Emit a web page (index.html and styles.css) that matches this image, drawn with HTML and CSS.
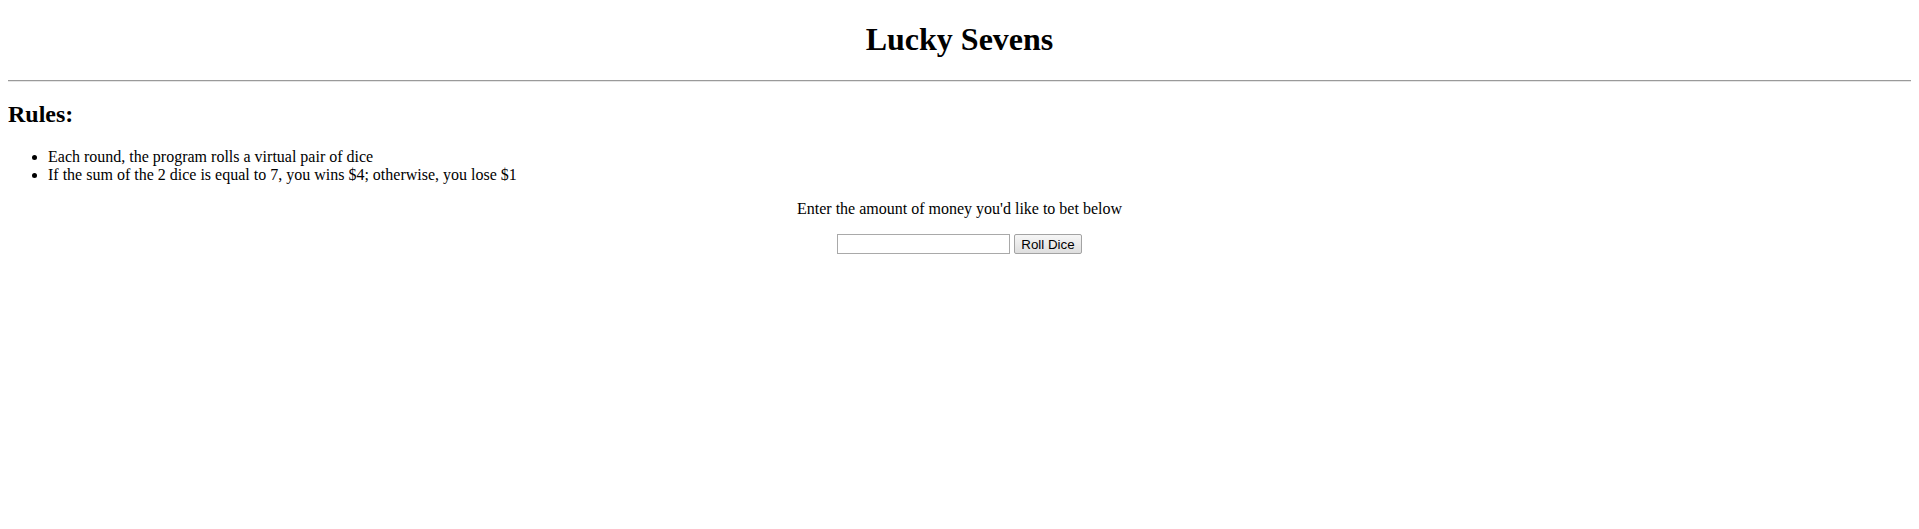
FILE: index.html
```html
<!DOCTYPE html>
<html>
<head>
<meta charset="utf-8">
<title>Lucky Sevens</title>
<link rel="stylesheet" href="styles.css">
</head>
<body class="page">
<h1 class="title">Lucky Sevens</h1>
<hr class="rule">
<h2 class="subtitle">Rules:</h2>
<ul class="rules">
<li>Each round, the program rolls a virtual pair of dice</li>
<li>If the sum of the 2 dice is equal to 7, you wins $4; otherwise, you lose $1</li>
</ul>
<p class="prompt">Enter the amount of money you'd like to bet below</p>
<form class="bet-form">
<input class="bet-input" type="text"> <button class="roll-btn" type="button">Roll Dice</button>
</form>
</body>
</html>
```

FILE: styles.css
```css
.page {
  margin: 0 8px 8px;
  font-family: "Liberation Serif", "Times New Roman", serif;
  font-size: 16px;
  color: #000;
  background: #fff;
}
.title {
  text-align: center;
  font-size: 32px;
  font-weight: bold;
  margin: 21.44px 0;
}
.rule {
  margin: 8px 0;
  border: none;
  border-top: 1px solid #9a9a9a;
  border-bottom: 1px solid #e6e6e6;
  height: 0;
}
.subtitle {
  font-size: 24px;
  font-weight: bold;
  margin: 18.9px 0 19.92px;
}
.rules {
  margin: 16px 0;
  padding-left: 40px;
}
.prompt {
  text-align: center;
  margin: 16px 0;
}
.bet-form {
  text-align: center;
  margin: 0;
}
.bet-input {
  box-sizing: border-box;
  width: 173px;
  height: 20px;
  border: 1px solid #a9a9a9;
  padding: 1px 2px;
  font-family: Arial, "Liberation Sans", sans-serif;
  font-size: 13.33px;
  vertical-align: middle;
  background: #fff;
}
.roll-btn {
  box-sizing: border-box;
  height: 20px;
  padding: 0 6px;
  border: 1px solid #a3a3a3;
  border-radius: 2px;
  background: linear-gradient(#f6f6f6, #dedede);
  font-family: Arial, "Liberation Sans", sans-serif;
  font-size: 13.33px;
  color: #000;
  vertical-align: middle;
}
```
